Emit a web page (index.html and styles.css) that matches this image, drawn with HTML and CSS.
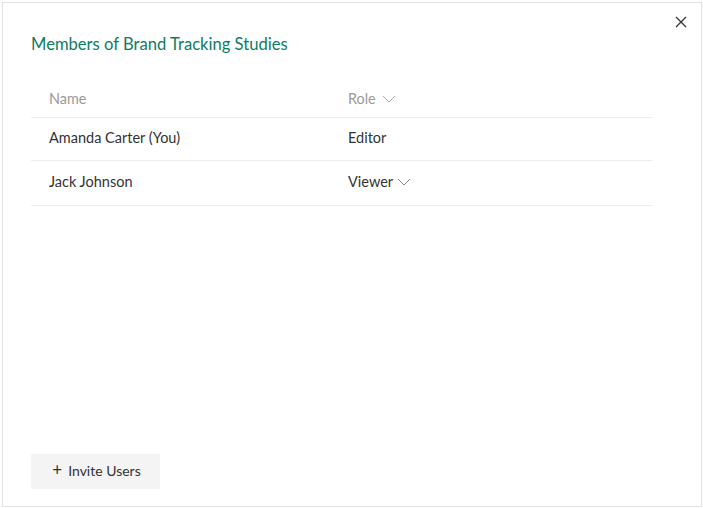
FILE: index.html
```html
<!DOCTYPE html>
<html>
<head>
<meta charset="utf-8">
<link rel="stylesheet" href="styles.css">
</head>
<body>
<div class="modal">
  <button class="close" aria-label="Close">
    <svg width="12" height="12" viewBox="0 0 12 12"><path d="M1 1L11 11M11 1L1 11" stroke="#333" stroke-width="1.3" fill="none"/></svg>
  </button>
  <h1 class="title">Members of Brand Tracking Studies</h1>
  <div class="table">
    <div class="row head">
      <div class="cell name">Name</div>
      <div class="cell role">Role <svg class="chev" width="14" height="8" viewBox="0 0 14 8"><path d="M1 1L7 7L13 1" stroke="#aaa" stroke-width="1" fill="none"/></svg></div>
    </div>
    <div class="row">
      <div class="cell name">Amanda Carter (You)</div>
      <div class="cell role">Editor</div>
    </div>
    <div class="row tall">
      <div class="cell name">Jack Johnson</div>
      <div class="cell role">Viewer <svg class="chev v" width="14" height="8" viewBox="0 0 14 8"><path d="M1 1L7 7L13 1" stroke="#888" stroke-width="1" fill="none"/></svg></div>
    </div>
  </div>
  <button class="invite"><span class="plus">+</span> Invite Users</button>
</div>
</body>
</html>
```
FILE: styles.css
```css
* { box-sizing: border-box; }
html, body { margin: 0; padding: 0; background: #fff; }
body { font-family: "Lato", "Noto Sans", sans-serif; color: #333; }
.modal {
  position: relative;
  margin: 2px 0 0 2px;
  width: 700px;
  height: 505px;
  border: 1px solid #e2e2e2;
  padding: 31px 49px 17px 28px;
  display: flex;
  flex-direction: column;
}
.close {
  position: absolute;
  top: 13px;
  right: 14px;
  border: 0;
  background: none;
  padding: 0;
  width: 12px;
  height: 12px;
  display: flex;
}
.title {
  margin: 0;
  font-size: 16.6px;
  line-height: 20px;
  font-weight: 400;
  color: #0b7d5f;
}
.table { margin-top: 25px; width: 621px; }
.row {
  display: flex;
  align-items: center;
  height: 43px;
  border-bottom: 1px solid #ececec;
  font-size: 14.5px;
  padding-bottom: 3px;
}
.row.head { height: 39px; padding-bottom: 0; font-size: 14.4px; color: #9a9a9a; }
.row.tall { height: 45px; }
.cell { padding-left: 18px; }
.cell.name { width: 299px; }
.cell.role { display: flex; align-items: center; }
.chev { margin-left: 6px; margin-top: 1px; }
.chev.v { margin-left: 4px; }
.invite {
  margin-top: auto;
  align-self: flex-start;
  width: 129px;
  height: 35px;
  border: 0;
  background: #f4f4f4;
  font-family: inherit;
  font-size: 14px;
  color: #333;
  padding: 0 0 2px 2px;
  display: flex;
  align-items: center;
  justify-content: center;
  gap: 0;
}
.plus { font-size: 17px; margin-right: 6px; line-height: 1; margin-top: -2px; }
```
